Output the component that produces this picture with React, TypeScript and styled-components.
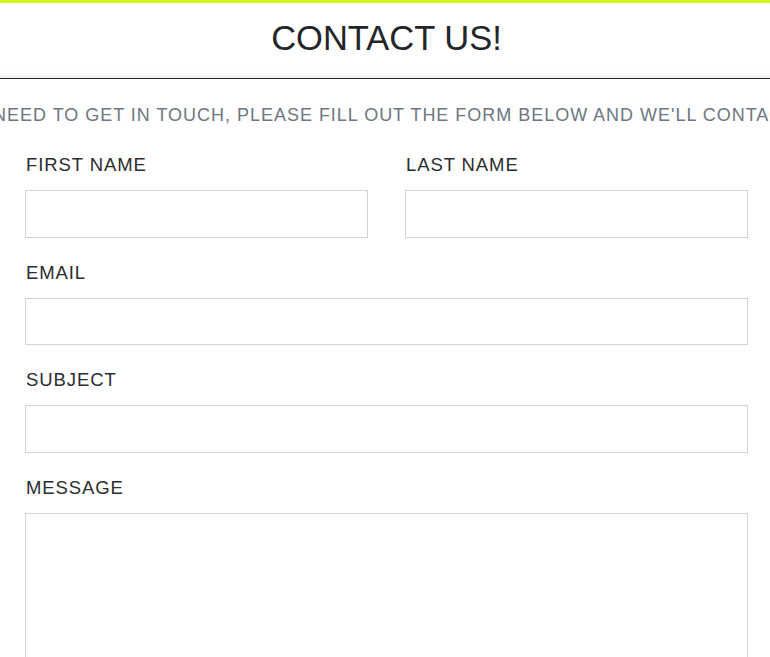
import React from "react";
import styled, { createGlobalStyle } from "styled-components";

const Global = createGlobalStyle`
  html, body { margin: 0; padding: 0; background: #ffffff; }
  body { font-family: "Liberation Sans", Arial, sans-serif; overflow: hidden; }
  * { box-sizing: border-box; }
`;

const Page = styled.div`
  width: 770px;
  height: 657px;
  overflow: hidden;
  border-top: 3px solid #d2ff1c;
`;

const Header = styled.header`
  height: 76px;
  display: flex;
  align-items: center;
  justify-content: center;
  border-bottom: 1px solid #222;
  box-shadow: inset 0 -9px 9px -9px rgba(0, 0, 0, 0.12);
`;

const Title = styled.h1`
  margin: 0 0 4px 3px;
  font-family: "Liberation Sans", Arial, sans-serif;
  font-weight: 400;
  font-size: 34.5px;
  letter-spacing: 0px;
  color: #232529;
`;

const Intro = styled.div`
  display: flex;
  justify-content: center;
  overflow: hidden;
  margin-top: 25px;
  height: 22px;
`;

const IntroText = styled.p`
  margin: 0;
  flex: none;
  white-space: nowrap;
  font-size: 18px;
  letter-spacing: 0.98px;
  color: #6e7681;
  line-height: 22px;
`;

const Form = styled.form`
  padding: 29px 22px 0 25px;
  display: flex;
  flex-direction: column;
  gap: 25px;
`;

const Row = styled.div`
  display: grid;
  grid-template-columns: 1fr 1fr;
  column-gap: 37px;
`;

const Field = styled.div`
  display: flex;
  flex-direction: column;
`;

const Label = styled.label`
  font-family: "Liberation Sans", Arial, sans-serif;
  font-size: 18.5px;
  letter-spacing: 0.9px;
  color: #2b2d31;
  line-height: 20px;
  margin-bottom: 15px;
  padding-left: 1px;
`;

const Input = styled.input`
  height: 47.5px;
  width: 100%;
  border: 1px solid #cfd4da;
  background: #fff;
  outline: none;
  font-size: 16px;
`;

const TextArea = styled.textarea`
  height: 170px;
  width: 100%;
  border: 1px solid #cfd4da;
  background: #fff;
  resize: none;
  outline: none;
  font-size: 16px;
`;

export default function App() {
  return (
    <>
      <Global />
      <Page>
        <Header>
          <Title>CONTACT US!</Title>
        </Header>
        <Intro>
          <IntroText>
            IF YOU NEED TO GET IN TOUCH, PLEASE FILL OUT THE FORM BELOW AND WE'LL CONTACT YOU.
          </IntroText>
        </Intro>
        <Form onSubmit={(e) => e.preventDefault()}>
          <Row>
            <Field>
              <Label htmlFor="first">FIRST NAME</Label>
              <Input id="first" type="text" />
            </Field>
            <Field>
              <Label htmlFor="last">LAST NAME</Label>
              <Input id="last" type="text" />
            </Field>
          </Row>
          <Field>
            <Label htmlFor="email">EMAIL</Label>
            <Input id="email" type="email" />
          </Field>
          <Field>
            <Label htmlFor="subject">SUBJECT</Label>
            <Input id="subject" type="text" />
          </Field>
          <Field>
            <Label htmlFor="message">MESSAGE</Label>
            <TextArea id="message" />
          </Field>
        </Form>
      </Page>
    </>
  );
}
